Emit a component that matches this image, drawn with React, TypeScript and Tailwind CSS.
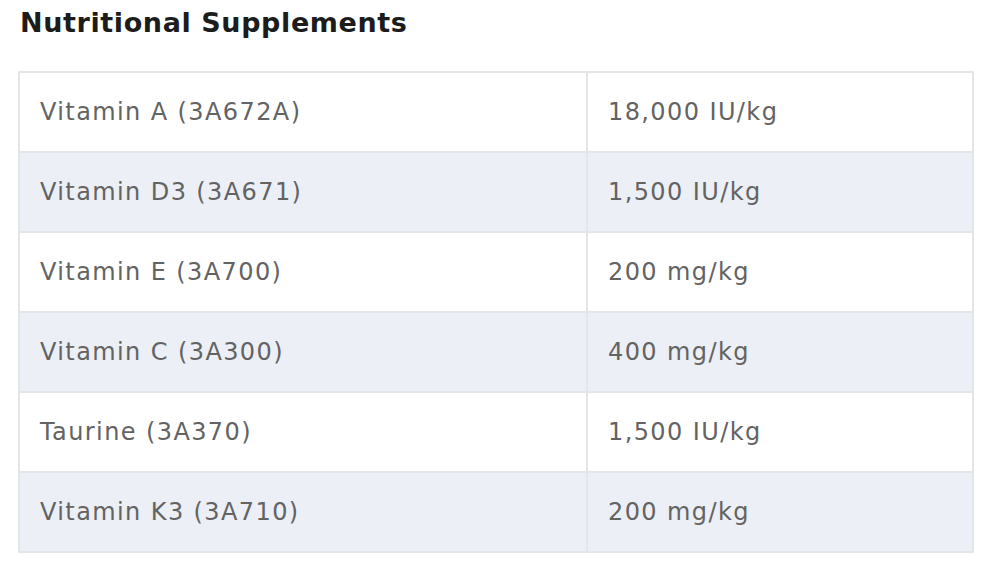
import React from 'react';

const rows: [string, string][] = [
  ['Vitamin A (3A672A)', '18,000 IU/kg'],
  ['Vitamin D3 (3A671)', '1,500 IU/kg'],
  ['Vitamin E (3A700)', '200 mg/kg'],
  ['Vitamin C (3A300)', '400 mg/kg'],
  ['Taurine (3A370)', '1,500 IU/kg'],
  ['Vitamin K3 (3A710)', '200 mg/kg'],
];

const App: React.FC = () => {
  return (
    <div className="w-[1000px] h-[575px] bg-white overflow-hidden font-['DejaVu_Sans',sans-serif]">
      <h2 className="pl-[20px] pt-[3px] h-[71px] text-[27px] font-bold text-[#1c1c1c] tracking-[0.6px]">
        Nutritional Supplements
      </h2>
      <div className="ml-[18px] w-[956px] border-2 border-[#e3e5e9]">
        {rows.map(([name, amount], i) => (
          <div
            key={name}
            className={`flex ${i > 0 ? 'h-[80px] border-t-2 border-[#e3e5e9]' : 'h-[78px]'} ${i % 2 === 1 ? 'bg-[#eceff5]' : 'bg-white'}`}
          >
            <div className="w-[568px] flex items-center pl-[20px] border-r-2 border-[#e3e5e9] text-[24px] tracking-[1.4px] text-[#636363]">
              {name}
            </div>
            <div className="flex-1 flex items-center pl-[20px] text-[24px] tracking-[1.4px] text-[#636363]">
              {amount}
            </div>
          </div>
        ))}
      </div>
    </div>
  );
};

export default App;
